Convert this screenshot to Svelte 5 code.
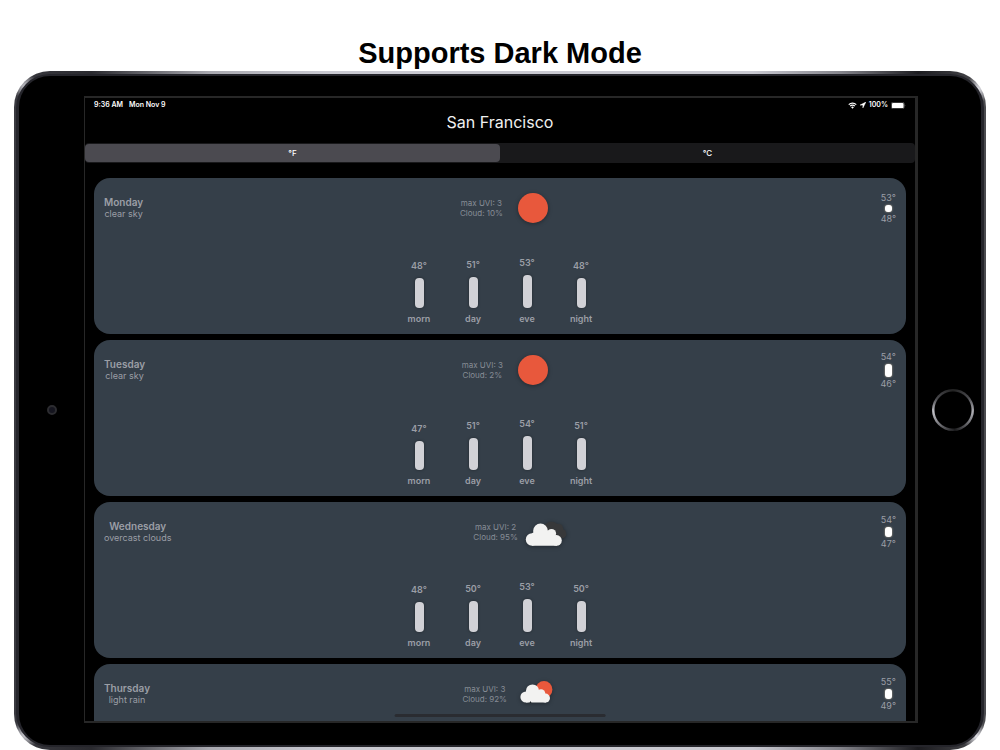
<script>
	let unit = 'F';

	const days = [
		{
			name: 'Monday', sky: 'clear sky', uvi: 3, cloud: 10, icon: 'sun', max: 53, min: 48, range: 7,
			parts: [['morn', 48, 30], ['day', 51, 31], ['eve', 53, 33], ['night', 48, 30]]
		},
		{
			name: 'Tuesday', sky: 'clear sky', uvi: 3, cloud: 2, icon: 'sun', max: 54, min: 46, range: 13,
			parts: [['morn', 47, 29], ['day', 51, 32], ['eve', 54, 34], ['night', 51, 32]]
		},
		{
			name: 'Wednesday', sky: 'overcast clouds', uvi: 2, cloud: 95, icon: 'clouds', max: 54, min: 47, range: 10,
			parts: [['morn', 48, 30], ['day', 50, 31], ['eve', 53, 33], ['night', 50, 31]]
		},
		{
			name: 'Thursday', sky: 'light rain', uvi: 3, cloud: 92, icon: 'rain', max: 55, min: 49, range: 10,
			parts: []
		}
	];
</script>

<main class="page">
	<h1>Supports Dark Mode</h1>

	<div class="device">
		<div class="rim">
			<div class="body">
				<div class="side side--left"><span class="camera"></span></div>

				<div class="screen">
					<div class="status">
						<span>9:36 AM</span>
						<span>Mon Nov 9</span>
						<span class="status__right">
							<svg width="9" height="7" viewBox="0 0 18 14" aria-hidden="true">
								<path d="M1.5 5.2a10.6 10.6 0 0 1 15 0M4.3 8.2a6.6 6.6 0 0 1 9.4 0" fill="none" stroke="#fff" stroke-width="2.6" />
								<path d="M9 13.6l-2.8-3a4 4 0 0 1 5.600 0z" fill="#fff" />
							</svg>
							<svg width="6" height="6" viewBox="0 0 12 12" aria-hidden="true">
								<path d="M11.800.2L.2 6.200h5.600v5.600z" fill="#fff" stroke="#fff" />
							</svg>
							<span>100%</span>
							<svg width="15" height="7" viewBox="0 0 15 7" aria-hidden="true">
								<rect x=".25" y=".25" width="13" height="6.500" rx="1.800" fill="none" stroke="#888" stroke-width=".5" />
								<rect x=".9" y=".9" width="11.700" height="5.200" rx="1.200" fill="#fff" />
								<path d="M13.800 2.400q1 1.100 0 2.200z" fill="#888" />
							</svg>
						</span>
					</div>

					<h2>San Francisco</h2>

					<div class="units" role="group" aria-label="Temperature unit">
						<button class:selected={unit === 'F'} aria-pressed={unit === 'F'} on:click={() => (unit = 'F')}>°F</button>
						<button class:selected={unit === 'C'} aria-pressed={unit === 'C'} on:click={() => (unit = 'C')}>°C</button>
					</div>

					<div class="days">
						{#each days as day}
							<article class="card">
								<header>
									<div class="summary">
										<h3>{day.name}</h3>
										<p>{day.sky}</p>
									</div>
									<div class="now">
										<div class="details">
											<p>max UVI: {day.uvi}</p>
											<p>Cloud: {day.cloud}%</p>
										</div>
										<svg class="weather" width="57" height="40" viewBox="0 0 57 40" aria-hidden="true">
											{#if day.icon === 'sun'}
												<circle cx="26" cy="20" r="15" fill="#e8583c" />
											{:else if day.icon === 'clouds'}
												<path d="M22 14a8 7.500 0 0 1 13-2 4.500 4.500 0 0 1 6 5 5 5 0 0 1 1 9H26z" fill="#37383a" />
												<g fill="#f2f2f1">
													<circle cx="10" cy="27.500" r="6.200" />
													<circle cx="18.500" cy="19" r="7.400" />
													<circle cx="29.500" cy="21.500" r="4.600" />
													<circle cx="34.500" cy="28.400" r="5.300" />
													<path d="M10 21.300l9-5 10 4 6 4v9.400H10z" />
												</g>
											{:else}
												<circle cx="33" cy="15.500" r="8.400" fill="#e8583c" />
												<g fill="#f2f2f1">
													<circle cx="15" cy="23" r="5.600" />
													<circle cx="21.500" cy="17" r="6.600" />
													<circle cx="30" cy="19.500" r="4.300" />
													<circle cx="34.500" cy="24.100" r="4.500" />
													<path d="M15 18l8-3 7 2 5 4v7.600H15z" />
												</g>
												<path d="M19.500 27l1 2h-2z" fill="#20252b" />
											{/if}
										</svg>
									</div>
									<div class="range">
										<span>{day.max}°</span>
										<i style="height: {day.range}px"></i>
										<span>{day.min}°</span>
									</div>
								</header>

								{#if day.parts.length}
									<div class="parts">
										{#each day.parts as [label, temp, height]}
											<div class="part">
												<span>{temp}°</span>
												<i style="height: {height}px"></i>
												<span>{label}</span>
											</div>
										{/each}
									</div>
								{/if}
							</article>
						{/each}
					</div>

					<span class="indicator"></span>
				</div>

				<div class="side side--right"><button class="home" aria-label="Home"></button></div>
			</div>
		</div>
	</div>
</main>

<style>
	:global(body) {
		background: #fff;
	}

	.page {
		box-sizing: border-box;
		display: flex;
		flex-direction: column;
		height: 100vh;
		padding: 36px 14px 0;
		font-family: Inter, 'Liberation Sans', sans-serif;
	}

	h1,
	h2,
	h3,
	p {
		margin: 0;
	}

	h1 {
		font: bold 29px/35px 'Liberation Sans', Arial, sans-serif;
		text-align: center;
		color: #000;
	}

	.device {
		flex: 1;
		min-height: 0;
		display: flex;
		padding: 3px 2px;
		border-radius: 36px;
		background:
			radial-gradient(circle at 12px 16px, #d8d8de 0, transparent 13px),
			radial-gradient(circle at calc(100% - 8px) 18px, #e4e4ea 0, transparent 14px),
			radial-gradient(circle at 12px calc(100% - 16px), #e4e4ea 0, transparent 14px),
			radial-gradient(circle at calc(100% - 10px) calc(100% - 14px), #e4e4ea 0, transparent 14px),
			linear-gradient(90deg, #3a3a40 0, #2a2a2f 8%, #a9a9b0 20%, #c9c9d1 32%, #c9c9d1 76%, #85858c 85%, #1c1c20 93%, #4c4c50 100%);
	}

	.rim {
		flex: 1;
		display: flex;
		min-height: 0;
		padding: 2px 3px;
		border-radius: 34px;
		background: #25252b;
	}

	.body {
		flex: 1;
		display: flex;
		min-height: 0;
		padding: 20px 0 22px;
		border-radius: 31px;
		background: #000;
	}

	.side {
		box-sizing: border-box;
		display: flex;
		align-items: center;
	}

	.side--left {
		justify-content: center;
		width: 65px;
	}

	.side--right {
		justify-content: flex-end;
		width: 63px;
		padding-right: 7px;
	}

	.camera {
		width: 6px;
		height: 6px;
		border: 2px solid #2c2c30;
		border-radius: 50%;
		background: #15151f;
	}

	.home {
		width: 42px;
		height: 42px;
		padding: 0;
		border: 0;
		border-radius: 50%;
		background: radial-gradient(circle, #000 18px, transparent 19px),
			conic-gradient(#222 0, #48484c 50deg, #b0b0b6 95deg, #77777c 125deg, #1c1c1e 175deg, #77777c 225deg, #c4c4ca 265deg, #48484c 305deg, #222 360deg);
	}

	.screen {
		position: relative;
		flex: 1;
		min-width: 0;
		display: flex;
		flex-direction: column;
		overflow: hidden;
		border: 2px solid #272727;
		border-width: 2px 3px 2px 1px;
		background: #000;
		color: #fff;
	}

	.status {
		display: flex;
		align-items: center;
		gap: 6px;
		padding: 0 9px;
		font-size: 7px;
		font-weight: 600;
		line-height: 14px;
	}

	.status__right {
		display: flex;
		align-items: center;
		gap: 3px;
		margin-left: auto;
	}

	.status svg {
		display: block;
	}

	h2 {
		font-size: 16px;
		font-weight: 400;
		line-height: 21px;
		text-align: center;
		color: #f0f0f0;
	}

	.units {
		display: flex;
		margin-top: 10px;
		padding: 1px 0;
		border-radius: 4px;
		background: #19191b;
	}

	.units button {
		flex: 1;
		height: 18px;
		padding: 0;
		border: 0;
		border-radius: 4px;
		background: none;
		color: #fff;
		font: 500 8px/18px Inter, sans-serif;
	}

	.units button.selected {
		background: #4b4a50;
	}

	.days {
		flex: 1;
		min-height: 0;
		display: flex;
		flex-direction: column;
		gap: 6px;
		overflow: hidden;
		padding: 15px 9px 0;
	}

	.card {
		box-sizing: border-box;
		flex: none;
		display: flex;
		flex-direction: column;
		justify-content: space-between;
		min-height: 156px;
		padding: 10px 10px 9px;
		border-radius: 16px;
		background: #353f49;
		color: #9b9ea6;
		text-align: center;
	}

	.card header {
		display: flex;
		align-items: center;
		justify-content: space-between;
		height: 40px;
	}

	h3 {
		font-size: 10px;
		font-weight: 600;
		line-height: 12px;
	}

	.summary p {
		font-size: 9px;
		line-height: 12px;
	}

	.now {
		display: flex;
		align-items: center;
		gap: 4px;
	}

	.details {
		color: #878d96;
		font-size: 8px;
		line-height: 10px;
	}

	.weather {
		display: block;
		filter: drop-shadow(0 1px 2px rgba(0, 0, 0, 0.35));
	}

	.range,
	.part {
		display: flex;
		flex-direction: column;
		align-items: center;
	}

	.range {
		gap: 1px;
		font-size: 9px;
		line-height: 12px;
	}

	.range i {
		width: 7px;
		border-radius: 3px;
		background: #fff;
		box-shadow: 0 0 2px #c8b8a0;
	}

	.parts {
		display: flex;
		align-items: flex-end;
		justify-content: center;
		gap: 30px;
	}

	.part {
		width: 24px;
		gap: 4px;
		font-size: 9px;
		font-weight: 600;
		line-height: 13px;
	}

	.part i {
		width: 9px;
		margin-top: 2px;
		border-radius: 4px;
		background: #d1d1d6;
		box-shadow: 0 0 3px rgba(0, 0, 0, 0.4);
	}

	.indicator {
		position: absolute;
		bottom: 4px;
		left: 50%;
		width: 25.4%;
		height: 3px;
		border-radius: 2px;
		background: #2a2c31;
		transform: translateX(-50%);
	}
</style>
